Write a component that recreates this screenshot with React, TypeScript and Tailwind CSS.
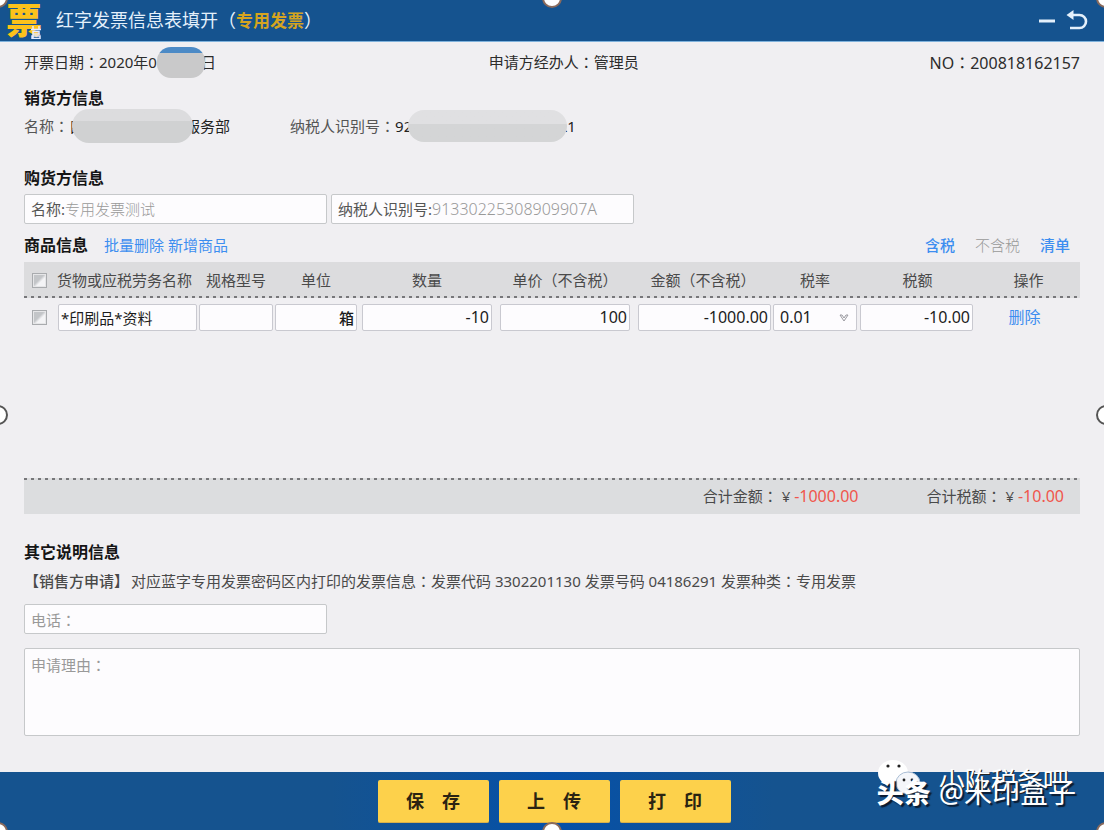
import React from 'react';
import { clsx } from 'clsx';

const columns = [
  { title: '规格型号', width: 'w-[76px]' },
  { title: '单位', width: 'w-[84px]' },
  { title: '数量', width: 'w-[138px]' },
  { title: '单价', note: '不含税', width: 'w-[138px]' },
  { title: '金额', note: '不含税', width: 'w-[138px]' },
  { title: '税率', width: 'w-[86px]' },
  { title: '税额', width: 'w-[119px]' },
  { title: '操作', width: 'w-[103px]' },
];

const handles = [
  '-top-3 -left-3 border-[#8a6a5c]',
  '-top-3 left-1/2 -ml-2.5 border-[#8a6a5c]',
  '-top-3 -right-3 border-[#8a6a5c]',
  'top-1/2 -left-3 -mt-2.5 border-[#555]',
  'top-1/2 -right-3 -mt-2.5 border-[#555]',
  '-bottom-3 -left-3 border-[#8a6a5c]',
  '-bottom-3 left-1/2 -ml-2.5 border-[#8a6a5c]',
  '-bottom-3 -right-3 border-[#8a6a5c]',
];

const box = 'rounded-xs border border-[#c6c8ca] bg-[#fdfcfe]';
const cell = 'h-[27px] w-full rounded-xs border border-[#c9c9d0] bg-[#fdfcfe] px-0.5 text-[#1c1c1c] outline-none';
const dots = 'bg-[repeating-linear-gradient(90deg,#77777a_0_3px,transparent_3px_7px)]';

// full-width colon, centred in its slot
function Colon() {
  return <span className="font-['Noto_Sans_CJK_TC',sans-serif]">{'\uff1a'}</span>;
}

function Parens({ children }: { children: React.ReactNode }) {
  return <>{'\uff08'}{children}{'\uff09'}</>;
}

function SectionTitle({ children, className }: { children: React.ReactNode; className?: string }) {
  return <h2 className={clsx('flex items-center text-base font-bold text-[#151515]', className)}>{children}</h2>;
}

function Tick({ label }: { label: string }) {
  return (
    <input
      type="checkbox"
      aria-label={label}
      className="ml-2 block size-[15px] appearance-none border border-[#a9abae] bg-linear-to-br from-[#c3c5c8] from-45% to-[#f4f4f6] to-60% shadow-[inset_0_0_0_1px_#e6e6e8]"
    />
  );
}

function TopBar() {
  return (
    <header className="flex h-[42px] items-center border-b border-[#7fb2dc] bg-[#15538f] pr-4 pl-1.5 text-[#e4f0fb]">
      <div className="relative text-4xl leading-none font-black text-[#fcc21b]">
        票
        <svg viewBox="0 0 12 13" className="absolute right-0 bottom-0 h-[13px] w-3" fill="none" stroke="#e6ecff" strokeWidth="1.5">
          <path d="M3 0v3M9 0v3M1 3.5h10M3 5.5h6v2.5H3zM2 10h8v2.5H2zM3 5v8" />
        </svg>
      </div>
      <h1 className="ml-3.5 text-lg">
        红字发票信息表填开
        <Parens>
          <span className="text-[17px] font-bold text-[#d5a420]">专用发票</span>
        </Parens>
      </h1>
      <div className="ml-auto flex items-center gap-2.5">
        <button type="button" aria-label="最小化" className="flex size-[18px] items-center">
          <svg viewBox="0 0 18 18" className="size-full">
            <path d="M1 9h16" stroke="currentColor" strokeWidth="3" />
          </svg>
        </button>
        <button type="button" aria-label="返回" className="size-[22px]">
          <svg viewBox="0 0 22 22" className="size-full" fill="none">
            <path d="M4 5h9.5a6.5 6.5 0 0 1 0 13H4" stroke="currentColor" strokeWidth="2.6" strokeLinejoin="round" />
            <path d="M7.5 0v10L.5 5z" fill="currentColor" />
          </svg>
        </button>
      </div>
    </header>
  );
}

function GoodsTable() {
  return (
    <div className="min-h-[216px]">
      <table className="w-full table-fixed border-collapse">
        <thead>
          <tr className={clsx('h-9 bg-[#dcdcde] bg-[length:100%_2px] bg-bottom bg-no-repeat text-[#4a4a4a]', dots)}>
            <th className="w-[33px] p-0"><Tick label="全选" /></th>
            <th className="w-[141px] p-0 text-left font-normal whitespace-nowrap">货物或应税劳务名称</th>
            {columns.map((c) => (
              <th key={c.title} className={clsx('p-0 text-center font-normal whitespace-nowrap', c.width)}>
                {c.title}
                {c.note && <Parens>{c.note}</Parens>}
              </th>
            ))}
          </tr>
        </thead>
        <tbody>
          <tr className="h-[38px]">
            <td className="p-0"><Tick label="选择此行" /></td>
            <td className="px-px py-0"><input aria-label="名称" defaultValue="*印刷品*资料" className={cell} /></td>
            <td className="px-px py-0"><input aria-label="规格型号" className={cell} /></td>
            <td className="px-px py-0"><input aria-label="单位" defaultValue="箱" className={clsx(cell, 'text-right font-medium')} /></td>
            <td className="px-1 py-0"><input aria-label="数量" defaultValue="-10" className={clsx(cell, 'text-right text-base')} /></td>
            <td className="px-1 py-0"><input aria-label="单价" defaultValue="100" className={clsx(cell, 'text-right text-base')} /></td>
            <td className="py-0 pr-px pl-1"><input aria-label="金额" defaultValue="-1000.00" className={clsx(cell, 'text-right text-base')} /></td>
            <td className="px-px py-0">
              <div className="relative">
                <select aria-label="税率" className={clsx(cell, 'appearance-none pl-1.5 text-base leading-none')}>
                  <option>0.01</option>
                </select>
                <svg viewBox="0 0 10 8" className="pointer-events-none absolute top-2.5 right-2 h-2 w-2.5" fill="none" stroke="#9a9aa0">
                  <path d="M1 1h2l2 3 2-3h2L5 7z" />
                </svg>
              </div>
            </td>
            <td className="py-0 pr-1 pl-0.5"><input aria-label="税额" defaultValue="-10.00" className={clsx(cell, 'text-right text-base')} /></td>
            <td className="py-0 pr-2 pl-0 text-center">
              <a href="#" className="text-base text-[#3d8ef0]">删除</a>
            </td>
          </tr>
        </tbody>
      </table>
    </div>
  );
}

function Watermark() {
  return (
    <div className="pointer-events-none absolute right-7 bottom-6 flex items-end gap-2 leading-none whitespace-nowrap text-white">
      <svg viewBox="0 0 46 40" className="absolute bottom-2 left-0 h-10 w-[46px]">
        <ellipse cx="16" cy="15" rx="15" ry="13" fill="#fff" />
        <ellipse cx="31" cy="25" rx="12" ry="11" fill="#f4f6fa" stroke="#a9bdd4" />
        <circle cx="11" cy="8" r="1.6" fill="#222" />
        <circle cx="22" cy="8" r="1.6" fill="#222" />
        <circle cx="27" cy="22" r="1.4" fill="#222" />
        <circle cx="35" cy="22" r="1.4" fill="#222" />
      </svg>
      <span className="relative text-[27px] font-black [text-shadow:2px_2px_1px_#0b1b30]">头条</span>
      <span className="relative text-[28px] [text-shadow:2px_2px_1px_#0b1b30]">
        <span className="absolute bottom-3 left-0 text-[26px] [text-shadow:1px_1px_0_#222]">小陈税务吧</span>
        <span className="relative">@米印盒子</span>
      </span>
    </div>
  );
}

export default function App() {
  return (
    <div className="relative flex min-h-screen flex-col overflow-hidden bg-[#f0eff2] font-['Noto_Sans','Noto_Sans_CJK_SC',sans-serif] text-[15px] text-[#333]">
      <TopBar />

      <main className="flex-1 px-6">
        <div className="flex h-10 items-center text-[#2c2c2c]">
          <div className="flex basis-[44%] items-center">
            <span>开票日期<Colon />2020年0</span>
            <span className="relative h-[31px] w-12 rounded-[14px] bg-linear-to-b from-[#4c8ac6] from-20% to-[#c9c9ca] to-20%" />
            <span className="-ml-1">日</span>
          </div>
          <span>申请方经办人<Colon />管理员</span>
          <span className="ml-auto text-base">NO<Colon />200818162157</span>
        </div>

        <SectionTitle className="h-8">销货方信息</SectionTitle>
        <div className="flex h-6 items-center text-[#222]">
          <span className="text-[#555]">名称<Colon /></span>
          <span>自</span>
          <span className="relative z-10 -ml-3 h-[34px] w-[121px] rounded-[17px] bg-linear-to-b from-[#dcdcde] from-35% to-[#d0d1d2] to-35%" />
          <span className="-ml-2">服务部</span>
          <span className="ml-15 text-[#555]">纳税人识别号<Colon /></span>
          <span>92</span>
          <span className="relative z-10 -ml-1 h-8 w-[159px] rounded-2xl bg-linear-to-b from-[#e0e0e2] from-45% to-[#d4d5d6] to-45%" />
          <span className="-ml-2">L1</span>
        </div>

        <SectionTitle className="mt-6 h-8">购货方信息</SectionTitle>
        <div className="flex gap-1">
          <div className={clsx('flex h-[30px] w-[303px] items-center px-1.5', box)}>
            <label htmlFor="buyer" className="shrink-0 text-[#555]">名称:</label>
            <input id="buyer" defaultValue="专用发票测试" className="min-w-0 flex-1 font-light text-[#999] outline-none" />
          </div>
          <div className={clsx('flex h-[30px] w-[303px] items-center px-1.5', box)}>
            <label htmlFor="taxno" className="shrink-0 text-[#555]">纳税人识别号:</label>
            <input id="taxno" defaultValue="91330225308909907A" className="min-w-0 flex-1 text-base font-light text-[#999] outline-none" />
          </div>
        </div>

        <div className="flex h-[38px] items-center pt-1 pr-2.5">
          <SectionTitle>商品信息</SectionTitle>
          <div className="ml-4 flex gap-1 text-[#3d8ef0]">
            <a href="#">批量删除</a>
            <a href="#">新增商品</a>
          </div>
          <div className="ml-auto flex items-center gap-5 text-[#3d8ef0]">
            <a href="#" className="font-medium">含税</a>
            <a href="#" className="font-light text-[#999]">不含税</a>
            <a href="#" className="font-medium">清单</a>
          </div>
        </div>

        <GoodsTable />

        <div className={clsx('flex h-9 items-center justify-end gap-17 bg-[#dcdddf] bg-[length:100%_2px] bg-top bg-no-repeat pr-4 text-[#4a4a4a]', dots)}>
          <span>合计金额<Colon /> ¥ <span className="text-base text-[#f0564c]">-1000.00</span></span>
          <span>合计税额<Colon /> ¥ <span className="text-base text-[#f0564c]">-10.00</span></span>
        </div>

        <SectionTitle className="mt-6 h-7">其它说明信息</SectionTitle>
        <p className="flex h-[30px] items-center gap-0.5 text-[#4a4a4a]">
          <span className="font-medium">【销售方申请】</span>
          <span>对应蓝字专用发票密码区内打印的发票信息<Colon />发票代码 3302201130 发票号码 04186291 发票种类<Colon />专用发票</span>
        </p>
        <input
          aria-label="电话"
          placeholder={'电话\uff1a'}
          className={clsx("mt-2 block h-[30px] w-[303px] px-1.5 font-['Noto_Sans_CJK_TC',sans-serif] outline-none placeholder:text-[#999]", box)}
        />
        <textarea
          aria-label="申请理由"
          placeholder={'申请理由\uff1a'}
          className={clsx("mt-3.5 block h-22 w-full resize-none px-1.5 py-1.5 font-['Noto_Sans_CJK_TC',sans-serif] leading-5 outline-none placeholder:text-[#999]", box)}
        />
      </main>

      <footer className="flex h-[58px] items-center justify-center gap-2.5 bg-linear-to-r from-[#15538f] from-30% via-[#0550a8] via-50% to-[#15538f] to-70% pl-1">
        {['保存', '上传', '打印'].map((t) => (
          <button key={t} type="button" className="flex h-[43px] w-[111px] items-center justify-center gap-[18px] rounded-xs border-b border-[#d9b04a] bg-[#fdd14b] text-lg font-bold text-[#2b2412]">
            <span>{t[0]}</span>
            <span>{t[1]}</span>
          </button>
        ))}
      </footer>

      <Watermark />
      {handles.map((h) => (
        <span key={h} className={clsx('absolute size-5 rounded-full border-2 bg-white', h)} />
      ))}
    </div>
  );
}
